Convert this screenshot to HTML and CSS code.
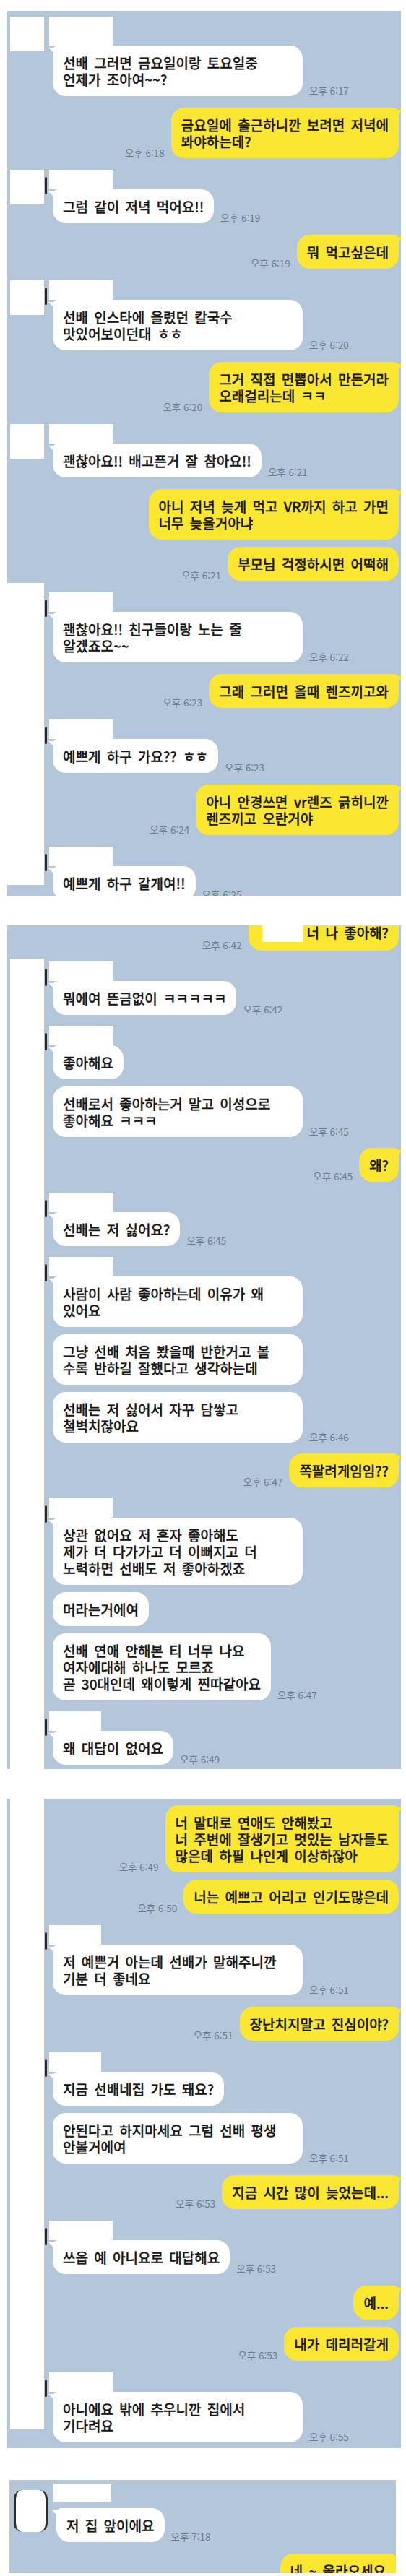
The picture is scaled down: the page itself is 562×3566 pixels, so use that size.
FILE: index.html
```html
<!DOCTYPE html>
<html lang="ko">
<head>
    <meta charset="UTF-8">
    <meta name="viewport" content="width=device-width, initial-scale=1.0">
    <title>카톡 캡처</title>
    <link rel="stylesheet" href="styles.css">
</head>
<body>

<div class="page">

    <!-- 1st capture -->
    <section class="panel p1">
        <div class="group in">
            <div class="avatar"></div>
            <div class="stack">
                <div class="name tall"></div>
                <div class="line">
                    <p class="bubble first wide">선배 그러면 금요일이랑 토요일중<br>언제가 조아여~~?</p>
                    <span class="time">오후 6:17</span>
                </div>
            </div>
        </div>
        <div class="group out">
            <div class="stack">
                <div class="line">
                    <span class="time">오후 6:18</span>
                    <p class="bubble first">금요일에 출근하니깐 보려면 저녁에<br>봐야하는데?</p>
                </div>
            </div>
        </div>
        <div class="group in">
            <div class="avatar edge"></div>
            <div class="stack">
                <div class="name"></div>
                <div class="line">
                    <p class="bubble first">그럼 같이 저녁 먹어요!!</p>
                    <span class="time">오후 6:19</span>
                </div>
            </div>
        </div>
        <div class="group out">
            <div class="stack">
                <div class="line">
                    <span class="time">오후 6:19</span>
                    <p class="bubble first">뭐 먹고싶은데</p>
                </div>
            </div>
        </div>
        <div class="group in">
            <div class="avatar edge"></div>
            <div class="stack">
                <div class="name"></div>
                <div class="line">
                    <p class="bubble first wide">선배 인스타에 올렸던 칼국수<br>맛있어보이던대 ㅎㅎ</p>
                    <span class="time">오후 6:20</span>
                </div>
            </div>
        </div>
        <div class="group out">
            <div class="stack">
                <div class="line">
                    <span class="time">오후 6:20</span>
                    <p class="bubble first">그거 직접 면뽑아서 만든거라<br>오래걸리는데 ㅋㅋ</p>
                </div>
            </div>
        </div>
        <div class="group in">
            <div class="avatar"></div>
            <div class="stack">
                <div class="name"></div>
                <div class="line">
                    <p class="bubble first">괜찮아요!! 배고픈거 잘 참아요!!</p>
                    <span class="time">오후 6:21</span>
                </div>
            </div>
        </div>
        <div class="group out">
            <div class="stack">
                <div class="line">
                    <p class="bubble first">아니 저녁 늦게 먹고 VR까지 하고 가면<br>너무 늦을거아냐</p>
                </div>
                <div class="line">
                    <span class="time">오후 6:21</span>
                    <p class="bubble">부모님 걱정하시면 어떡해</p>
                </div>
            </div>
        </div>
        <div class="group in">
            <div class="avatar edge"></div>
            <div class="stack">
                <div class="name"></div>
                <div class="line">
                    <p class="bubble first wide">괜찮아요!! 친구들이랑 노는 줄<br>알겠죠오~~</p>
                    <span class="time">오후 6:22</span>
                </div>
            </div>
        </div>
        <div class="group out">
            <div class="stack">
                <div class="line">
                    <span class="time">오후 6:23</span>
                    <p class="bubble first">그래 그러면 올때 렌즈끼고와</p>
                </div>
            </div>
        </div>
        <div class="group in">
            <div class="avatar edge"></div>
            <div class="stack">
                <div class="name"></div>
                <div class="line">
                    <p class="bubble first">예쁘게 하구 가요?? ㅎㅎ</p>
                    <span class="time">오후 6:23</span>
                </div>
            </div>
        </div>
        <div class="group out">
            <div class="stack">
                <div class="line">
                    <span class="time">오후 6:24</span>
                    <p class="bubble first">아니 안경쓰면 vr렌즈 긁히니깐<br>렌즈끼고 오란거야</p>
                </div>
            </div>
        </div>
        <div class="group in">
            <div class="avatar edge"></div>
            <div class="stack">
                <div class="name"></div>
                <div class="line">
                    <p class="bubble first">예쁘게 하구 갈게여!!</p>
                    <span class="time">오후 6:25</span>
                </div>
            </div>
        </div>
    </section>

    <!-- 2nd capture -->
    <section class="panel p2">
        <div class="group out">
            <div class="stack">
                <div class="line">
                    <span class="time">오후 6:42</span>
                    <p class="bubble first"><span class="hide"></span>너 나 좋아해?</p>
                </div>
            </div>
        </div>
        <div class="group in">
            <div class="avatar edge"></div>
            <div class="stack">
                <div class="name"></div>
                <div class="line">
                    <p class="bubble first">뭐에여 뜬금없이 ㅋㅋㅋㅋㅋ</p>
                    <span class="time">오후 6:42</span>
                </div>
            </div>
        </div>
        <div class="group in">
            <div class="avatar edge"></div>
            <div class="stack">
                <div class="name"></div>
                <div class="line">
                    <p class="bubble first">좋아해요</p>
                </div>
                <div class="line">
                    <p class="bubble wide">선배로서 좋아하는거 말고 이성으로<br>좋아해요 ㅋㅋㅋ</p>
                    <span class="time">오후 6:45</span>
                </div>
            </div>
        </div>
        <div class="group out">
            <div class="stack">
                <div class="line">
                    <span class="time">오후 6:45</span>
                    <p class="bubble first">왜?</p>
                </div>
            </div>
        </div>
        <div class="group in">
            <div class="avatar edge"></div>
            <div class="stack">
                <div class="name"></div>
                <div class="line">
                    <p class="bubble first">선배는 저 싫어요?</p>
                    <span class="time">오후 6:45</span>
                </div>
            </div>
        </div>
        <div class="group in">
            <div class="avatar edge"></div>
            <div class="stack">
                <div class="name"></div>
                <div class="line">
                    <p class="bubble first wide">사람이 사람 좋아하는데 이유가 왜<br>있어요</p>
                </div>
                <div class="line">
                    <p class="bubble wide">그냥 선배 처음 봤을때 반한거고 볼<br>수록 반하길 잘했다고 생각하는데</p>
                </div>
                <div class="line">
                    <p class="bubble wide">선배는 저 싫어서 자꾸 담쌓고<br>철벽치잖아요</p>
                    <span class="time">오후 6:46</span>
                </div>
            </div>
        </div>
        <div class="group out">
            <div class="stack">
                <div class="line">
                    <span class="time">오후 6:47</span>
                    <p class="bubble first">쪽팔려게임임??</p>
                </div>
            </div>
        </div>
        <div class="group in">
            <div class="avatar edge"></div>
            <div class="stack">
                <div class="name"></div>
                <div class="line">
                    <p class="bubble first wide">상관 없어요 저 혼자 좋아해도<br>제가 더 다가가고 더 이뻐지고 더<br>노력하면 선배도 저 좋아하겠죠</p>
                </div>
                <div class="line">
                    <p class="bubble">머라는거에여</p>
                </div>
                <div class="line">
                    <p class="bubble">선배 연애 안해본 티 너무 나요<br>여자에대해 하나도 모르죠<br>곧 30대인데 왜이렇게 찐따같아요</p>
                    <span class="time">오후 6:47</span>
                </div>
            </div>
        </div>
        <div class="group in">
            <div class="avatar edge"></div>
            <div class="stack">
                <div class="name short"></div>
                <div class="line">
                    <p class="bubble first">왜 대답이 없어요</p>
                    <span class="time">오후 6:49</span>
                </div>
            </div>
        </div>
    </section>

    <!-- 3rd capture -->
    <section class="panel p3">
        <div class="group out">
            <div class="stack">
                <div class="line">
                    <span class="time">오후 6:49</span>
                    <p class="bubble first">너 말대로 연애도 안해봤고<br>너 주변에 잘생기고 멋있는 남자들도<br>많은데 하필 나인게 이상하잖아</p>
                </div>
                <div class="line">
                    <span class="time">오후 6:50</span>
                    <p class="bubble">너는 예쁘고 어리고 인기도많은데</p>
                </div>
            </div>
        </div>
        <div class="group in">
            <div class="avatar edge"></div>
            <div class="stack">
                <div class="name short"></div>
                <div class="line">
                    <p class="bubble first wide">저 예쁜거 아는데 선배가 말해주니깐<br>기분 더 좋네요</p>
                    <span class="time">오후 6:51</span>
                </div>
            </div>
        </div>
        <div class="group out">
            <div class="stack">
                <div class="line">
                    <span class="time">오후 6:51</span>
                    <p class="bubble first">장난치지말고 진심이야?</p>
                </div>
            </div>
        </div>
        <div class="group in">
            <div class="avatar edge"></div>
            <div class="stack">
                <div class="name short"></div>
                <div class="line">
                    <p class="bubble first">지금 선배네집 가도 돼요?</p>
                </div>
                <div class="line">
                    <p class="bubble wide">안된다고 하지마세요 그럼 선배 평생<br>안볼거에여</p>
                    <span class="time">오후 6:51</span>
                </div>
            </div>
        </div>
        <div class="group out">
            <div class="stack">
                <div class="line">
                    <span class="time">오후 6:53</span>
                    <p class="bubble first">지금 시간 많이 늦었는데...</p>
                </div>
            </div>
        </div>
        <div class="group in">
            <div class="avatar edge"></div>
            <div class="stack">
                <div class="name"></div>
                <div class="line">
                    <p class="bubble first">쓰읍 예 아니요로 대답해요</p>
                    <span class="time">오후 6:53</span>
                </div>
            </div>
        </div>
        <div class="group out">
            <div class="stack">
                <div class="line">
                    <p class="bubble first">예...</p>
                </div>
                <div class="line">
                    <span class="time">오후 6:53</span>
                    <p class="bubble">내가 데리러갈게</p>
                </div>
            </div>
        </div>
        <div class="group in">
            <div class="avatar edge"></div>
            <div class="stack">
                <div class="name"></div>
                <div class="line">
                    <p class="bubble first wide">아니에요 밖에 추우니깐 집에서<br>기다려요</p>
                    <span class="time">오후 6:55</span>
                </div>
            </div>
        </div>
    </section>

    <!-- 4th capture -->
    <section class="panel p4">
        <div class="group in">
            <div class="avatar"></div>
            <div class="stack">
                <div class="name"></div>
                <div class="line">
                    <p class="bubble first">저 집 앞이에요</p>
                    <span class="time">오후 7:18</span>
                </div>
            </div>
        </div>
        <div class="group out">
            <div class="stack">
                <div class="line">
                    <p class="bubble first">네 ~ 올라오세요</p>
                </div>
            </div>
        </div>
    </section>

</div>

</body>
</html>
```

FILE: styles.css
```css
* {
    box-sizing: border-box;
}

body {
    margin: 0;
    background: #ffffff;
    font-family: "Noto Sans CJK KR", "Noto Sans", sans-serif;
    color: #161616;
}

.page {
    width: 562px;
    padding: 15px 0 4px 10px;
}

/* one captured screenshot */
.panel {
    width: 545px;
    overflow: hidden;
    display: flex;
    flex-direction: column;
    gap: 16px;
    padding: 0 3px 0 4px;
    margin-bottom: 41px;
    background-color: #b3c6da;
}

.p1 {
    height: 1225px;
    padding-top: 8px;
    background: linear-gradient(#fff, #fff) 0 792px / 51px 418px no-repeat, #b3c6da;
}

.p2 {
    height: 1168px;
    gap: 15px;
    background: linear-gradient(#fff, #fff) 4px 46px / 47px 100% no-repeat, #b3c6da;
}

.p2 > .group:first-child {
    margin-top: -14px;
}

.p3 {
    height: 899px;
    padding-top: 9px;
    margin-bottom: 44px;
    background: linear-gradient(#fff, #fff) 4px 0 / 47px 873px no-repeat, #b3c6da;
}

.p4 {
    width: 535px;
    height: 129px;
    margin-left: 3px;
    margin-bottom: 0;
    padding: 5px 0 0 6px;
}

/* message groups */
.group {
    flex: none;
    display: flex;
}

.group.out {
    justify-content: flex-end;
}

.avatar {
    position: relative;
    flex: none;
    width: 47px;
    height: 48px;
    margin-right: 6px;
    background: #fff;
}

.p2 .avatar, .p3 .avatar {
    background: none;
}

/* leftover edge of the blurred-out profile picture */
.edge::after {
    content: "";
    position: absolute;
    right: -4px;
    top: 10px;
    width: 3px;
    height: 24px;
    border-radius: 2px;
    background: #2a2a2a;
}

.p4 .avatar {
    width: 47px;
    height: 58px;
    margin-top: 9px;
    border-left: 3px solid #2e2e2e;
    border-right: 3px solid #2e2e2e;
    border-radius: 12px;
}

.stack {
    display: flex;
    flex-direction: column;
}

.in .stack {
    align-items: flex-start;
}

.out .stack {
    align-items: flex-end;
}

.name {
    width: 88px;
    height: 27px;
    margin-left: 1px;
    background: #fff;
}

.name.tall {
    height: 40px;
}

.name.short {
    width: 72px;
}

.p4 .name {
    width: 81px;
    height: 25px;
    margin-bottom: 9px;
}

.line {
    display: flex;
    align-items: flex-end;
    gap: 9px;
}

.line + .line {
    margin-top: 10px;
}

/* bubbles */
.bubble {
    position: relative;
    margin: 0;
    padding: 12px 14px;
    font-size: 19px;
    font-weight: 500;
    line-height: 23px;
    word-spacing: 3px;
    white-space: nowrap;
    border-radius: 18px;
    background-color: #ffffff;
    -webkit-text-stroke: 0.3px #161616;
}

.in .bubble {
    margin-left: 6px;
}

.out .bubble {
    background-color: #fbe632;
}

.wide {
    width: 346px;
}

.first::before {
    content: "";
    position: absolute;
    top: 3px;
    width: 10px;
    height: 10px;
    background: inherit;
}

.in .first {
    border-top-left-radius: 7px;
}

.in .first::before {
    left: -6px;
    clip-path: polygon(0 0, 100% 0, 100% 100%);
}

.out .first {
    border-top-right-radius: 7px;
}

.out .first::before {
    right: -6px;
    clip-path: polygon(0 0, 100% 0, 0 100%);
}

/* name covered up inside a message */
.hide {
    display: inline-block;
    width: 56px;
    height: 28px;
    margin: -8px 6px 0 5px;
    vertical-align: middle;
    background: #fff;
}

.time {
    flex: none;
    font-size: 13.5px;
    line-height: 16px;
    color: #6c7d92;
    white-space: nowrap;
}
```
